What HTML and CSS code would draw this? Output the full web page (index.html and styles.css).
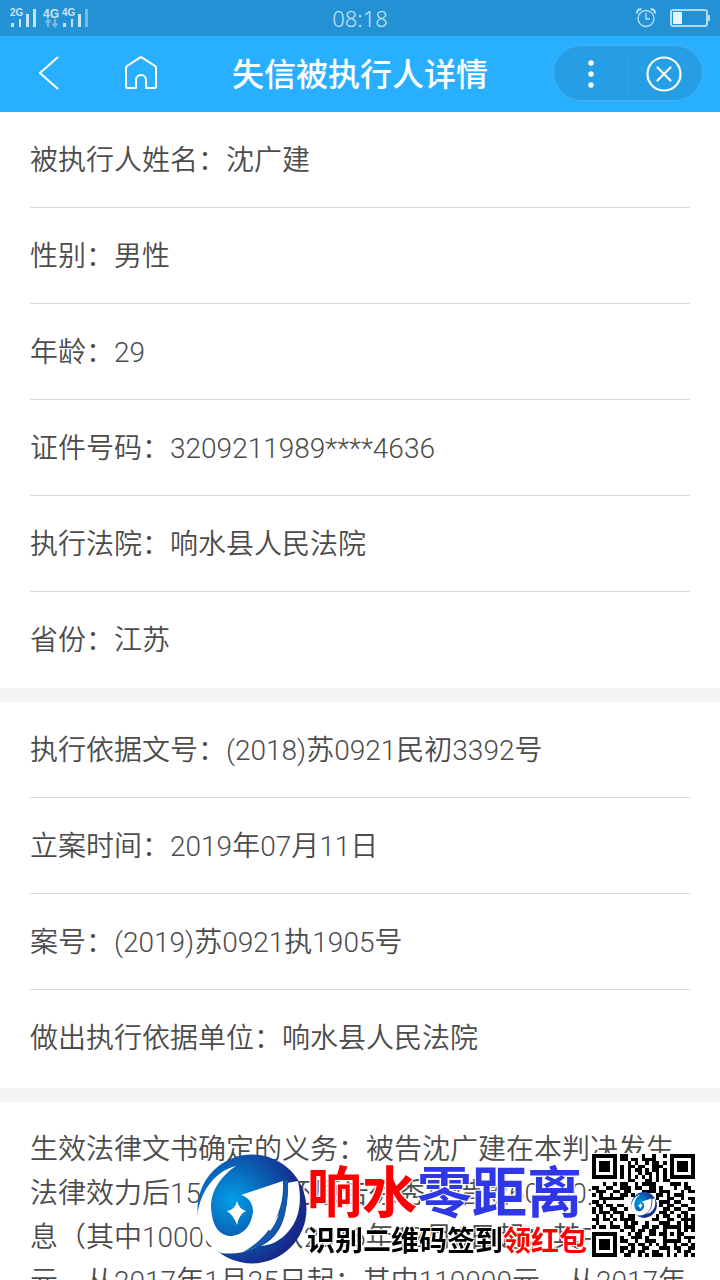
FILE: index.html
```
<!DOCTYPE html>
<html lang="zh-CN">
<head>
    <meta charset="UTF-8">
    <meta name="viewport" content="width=device-width, initial-scale=1.0">
    <title>失信被执行人详情</title>
    <link rel="stylesheet" href="styles.css">
</head>
<body>
    <div class="status-bar">
        <svg class="signal" width="80" height="22" viewBox="0 0 80 22" fill="#c8e4f4">
            <g font-family="Liberation Sans" font-weight="bold">
                <text x="0" y="9" font-size="10">2G</text>
                <text x="33" y="11" font-size="12">4G</text>
                <text x="52" y="9" font-size="10">4G</text>
            </g>
            <path d="M1 16h3v4h-3zM9 12h2v8h-2zM16 7h3v13h-3zM23 2h3v18h-3zM53 16h3v4h-3zM61 12h2v8h-2zM68 7h3v13h-3z"/>
            <path d="M75 2h3v18h-3z" opacity=".5"/>
            <path d="M38 20v-6M35.500 15.500l2.500-3 2.500 3M45 12v6M42.500 16.500l2.500 3 2.500-3" fill="none" stroke="#c8e4f4" stroke-width="2" opacity=".5"/>
        </svg>
        <span class="clock">08:18</span>
        <div class="status-right">
            <svg width="20" height="20" viewBox="0 0 20 20" fill="none" stroke="#c2e1f3" stroke-width="1.300">
                <circle cx="10" cy="10.500" r="8"/>
                <path d="M10 5v6h4"/>
                <path d="M1.500 5.500a3 3 0 0 1 4-4M18.500 5.500a3 3 0 0 0-4-4" stroke-width="2"/>
            </svg>
            <svg width="40" height="18" viewBox="0 0 40 18">
                <rect x="1" y="1" width="36" height="16" rx="2" fill="none" stroke="#b3daef" stroke-width="2"/>
                <rect x="3" y="3" width="9" height="12" fill="#e9f5fc"/>
                <rect x="38" y="6" width="2" height="6" fill="#b3daef"/>
            </svg>
        </div>
    </div>

    <header class="header">
        <div class="header-left">
            <button type="button" class="icon-button" aria-label="返回">
                <svg width="20" height="34" viewBox="0 0 20 34" fill="none" stroke="#fff" stroke-width="2">
                    <path d="M19 1L1 17l18 16"/>
                </svg>
            </button>
            <button type="button" class="icon-button" aria-label="首页">
                <svg width="32" height="34" viewBox="0 0 32 34" fill="none" stroke="#fff" stroke-width="2" stroke-linejoin="round">
                    <path d="M1 12q0-1 1-2L14.500 1.800q1.500-1 3 0L30 10q1 1 1 2V31q0 1-1 1H21V24a5 5 0 0 0-10 0V32H2q-1 0-1-1z"/>
                </svg>
            </button>
        </div>
        <h1>失信被执行人详情</h1>
        <div class="capsule">
            <button type="button" class="icon-button" aria-label="更多">
                <svg width="6" height="28" viewBox="0 0 6 28" fill="#fff">
                    <circle cx="3" cy="3" r="2.700"/>
                    <circle cx="3" cy="14" r="2.700"/>
                    <circle cx="3" cy="25" r="2.700"/>
                </svg>
            </button>
            <button type="button" class="icon-button" aria-label="关闭">
                <svg width="36" height="36" viewBox="0 0 36 36" fill="none" stroke="#fff" stroke-width="2.200">
                    <circle cx="18" cy="18" r="16.500"/>
                    <path d="M11.500 11.500l13 13M24.500 11.500l-13 13" stroke-linecap="round"/>
                </svg>
            </button>
        </div>
    </header>

    <main>
        <section class="card">
            <p class="row">被执行人姓名：沈广建</p>
            <p class="row">性别：男性</p>
            <p class="row">年龄：29</p>
            <p class="row">证件号码：3209211989****4636</p>
            <p class="row">执行法院：响水县人民法院</p>
            <p class="row">省份：江苏</p>
        </section>
        <section class="card case">
            <p class="row">执行依据文号：(2018)苏0921民初3392号</p>
            <p class="row">立案时间：2019年07月11日</p>
            <p class="row">案号：(2019)苏0921执1905号</p>
            <p class="row">做出执行依据单位：响水县人民法院</p>
        </section>
        <section class="card duty">
            生效法律文书确定的义务：被告沈广建在本判决发生<br>
            法律效力后15日内偿还原告徐秀芹借款60000元及利<br>
            息（其中10000元，从2016年12月6日起；其中10000<br>
            元，从2017年1月25日起；其中110000元，从2017年
        </section>
    </main>

    <aside class="watermark">
        <svg class="logo" viewBox="0 0 110 110">
            <defs>
                <radialGradient id="globe" cx="32%" cy="42%" r="65%">
                    <stop offset="0" stop-color="#00a0e9"/>
                    <stop offset=".5" stop-color="#0a62b5"/>
                    <stop offset="1" stop-color="#17288a"/>
                </radialGradient>
            </defs>
            <circle cx="55" cy="55" r="54.500" fill="url(#globe)"/>
            <!-- left crescent running into the bowl of the swoosh -->
            <path d="M39 12C19 17 5 35 1 57C-1 75 10 92 24 99C44 102 66 94 78 77C85 66 88 51 86 27L44 41C52 43 56 50 56 58C54 73 45 82 33 82C19 81 14 66 14 50C15 35 25 21 39 12Z" fill="#fff"/>
            <!-- right stroke -->
            <path d="M90 29L101 27C106 51 101 69 88 81C82 87 74 91 64 92C82 83 92 65 90 29Z" fill="#fff"/>
            <path d="M86 27L91 26C92 48 88 66 78 79C69 89 58 95 46 98C64 88 88 66 86 27Z" fill="#1258ac"/>
            <path d="M70 73q8-6 12-14q-3 11-9 18z" fill="#fff"/>
            <path d="M30 57q8-1 10-10q2 8 9 10q-7 3-9 14q-3-9-10-14z" fill="#fff"/>
        </svg>
        <div class="slogan">
            <p class="brand"><span class="red">响水</span><span class="blue">零距离</span></p>
            <p class="scan">识别二维码签到<span class="red">领红包</span></p>
        </div>
        <div class="qr">
            <svg viewBox="0 0 29 29" shape-rendering="crispEdges">
                <rect width="29" height="29" fill="#fff"/>
                <path id="qrPath" fill="#000"/>
            </svg>
            <svg class="qr-logo" viewBox="0 0 110 110">
                <circle cx="55" cy="55" r="54.500" fill="url(#globe)"/>
                <path d="M39 12C19 17 5 35 1 57C-1 75 10 92 24 99C44 102 66 94 78 77C85 66 88 51 86 27L44 41C52 43 56 50 56 58C54 73 45 82 33 82C19 81 14 66 14 50C15 35 25 21 39 12Z" fill="#fff"/>
                <path d="M90 29L101 27C106 51 101 69 88 81C82 87 74 91 64 92C82 83 92 65 90 29Z" fill="#fff"/>
                <path d="M30 57q8-1 10-10q2 8 9 10q-7 3-9 14q-3-9-10-14z" fill="#fff"/>
            </svg>
        </div>
    </aside>

    <script>
        const qrRows = [
            "1111111.11....1..1..1.1111111",
            "1000001.11.11.1111....1000001",
            "1011101...1.1..1.11.1.1011101",
            "1011101.1.11.11..111..1011101",
            "1011101.1.1.11.1.11.1.1011101",
            "1000001.1.1..1.11.1.1.1000001",
            "1111111.1.1.1.1.1.1.1.1111111",
            "..........11...11.1.11.......",
            "...1..1.11..1.1111....111.1..",
            "11..11..111.11..11.1...1..11.",
            ".111..11.11...1111.111...1.11",
            "1.1..1..11.1......11.1.111...",
            "..1111111.........1..11..1.11",
            "11.1............1..111.11...1",
            ".11.11.11..........1.11..11..",
            "1.1..11..1..........11.11..11",
            "1.111.111..........11.1..11..",
            ".1.1.1..1.11......1.11..1.1.1",
            "11.11.1.1111.....11..11..1111",
            ".1...1...1.11..1...111..1.1.1",
            "1.11.111.111..11.11.11111.111",
            "........1..1.11.11..1...1.1.1",
            "1111111...1.11..11.11.1.11...",
            "1000001.1..111.1....1...1.111",
            "1011101.11..1..111..11111..1.",
            "1011101...11.11.1.1.1..1.11.1",
            "1011101.11.1..11...111.11..11",
            "1000001.1.11.11..11..1..1.11.",
            "1111111..11..1.1.111.1.1..1.1"
        ];

        // one unit square per dark module
        let d = '';
        qrRows.forEach((row, y) => {
            for (let x = 0; x < row.length; x++) {
                if (row[x] === '1') {
                    d += `M${x} ${y}h1v1h-1z`;
                }
            }
        });
        document.getElementById('qrPath').setAttribute('d', d);
    </script>
</body>
</html>
```
FILE: styles.css
```
* {
    box-sizing: border-box;
}
body {
    margin: 0;
    height: 100vh;
    overflow: hidden;
    background: #fff;
    color: #4c4c4c;
    font-family: Roboto, "Noto Sans CJK SC", sans-serif;
    font-size: 28px;
    font-weight: 350;
}
h1, p {
    margin: 0;
}
.status-bar {
    display: grid;
    grid-template-columns: 1fr auto 1fr;
    align-items: center;
    height: 36px;
    padding: 0 10px;
    background: #2392d4;
}
.clock {
    color: #c8e4f4;
    font-family: "Noto Sans", sans-serif;
    font-size: 22px;
    line-height: 36px;
}
.status-right {
    display: flex;
    justify-content: flex-end;
    align-items: center;
    gap: 14px;
}
.header {
    display: grid;
    grid-template-columns: 1fr auto 1fr;
    align-items: center;
    height: 76px;
    padding: 0 17px 2px 39px;
    background: #29afff;
    color: #fff;
}
.header-left {
    display: flex;
    align-items: center;
    gap: 66px;
}
.header h1 {
    margin-right: 22px;
    padding-top: 4px;
    font-size: 32px;
    font-weight: 500;
    line-height: 48px;
}
.icon-button {
    display: flex;
    justify-content: center;
    align-items: center;
    padding: 0;
    border: none;
    background: none;
    cursor: pointer;
}
.capsule {
    display: grid;
    grid-template-columns: 1fr 1fr;
    justify-self: end;
    width: 150px;
    height: 56px;
    border: 1px solid #45b2f2;
    border-radius: 28px;
    background: #259ee6;
}
.capsule .icon-button {
    margin: 10px 0;
}
.capsule .icon-button + .icon-button {
    padding-right: 4px;
    border-left: 1px solid #36a6e9;
}
.card {
    padding: 0 30px;
}
.card + .card {
    border-top: 14px solid #f4f4f4;
}
.case {
    padding-bottom: 2px;
}
.row {
    height: 96px;
    padding-top: 3px;
    line-height: 92px;
    border-bottom: 1px solid #d9d9d9;
    white-space: nowrap;
}
.row:last-child {
    border-bottom: none;
}
.duty {
    padding-top: 26px;
    line-height: 44px;
    white-space: nowrap;
}
.watermark {
    position: fixed;
    right: 24px;
    bottom: 16px;
    display: flex;
    align-items: center;
}
.logo {
    width: 110px;
    height: 110px;
}
.slogan {
    width: 284px;
    margin-bottom: 6px;
    font-family: "Noto Sans CJK SC", sans-serif;
    font-weight: 700;
    white-space: nowrap;
    text-shadow: 1px 1px 1px #fff, -1px -1px 1px #fff, 1px -1px 1px #fff, -1px 1px 1px #fff;
}
.brand {
    font-size: 55px;
    line-height: 66px;
}
.scan {
    color: #000;
    font-size: 28px;
    line-height: 36px;
}
.red {
    color: #f00;
}
.blue {
    color: #3038e6;
}
.qr {
    position: relative;
    width: 105px;
    height: 105px;
    margin-bottom: 6px;
    padding: 1px;
    background: #fff;
}
.qr svg {
    display: block;
}
.qr .qr-logo {
    position: absolute;
    top: 39px;
    left: 40px;
    width: 26px;
    height: 26px;
}
```
